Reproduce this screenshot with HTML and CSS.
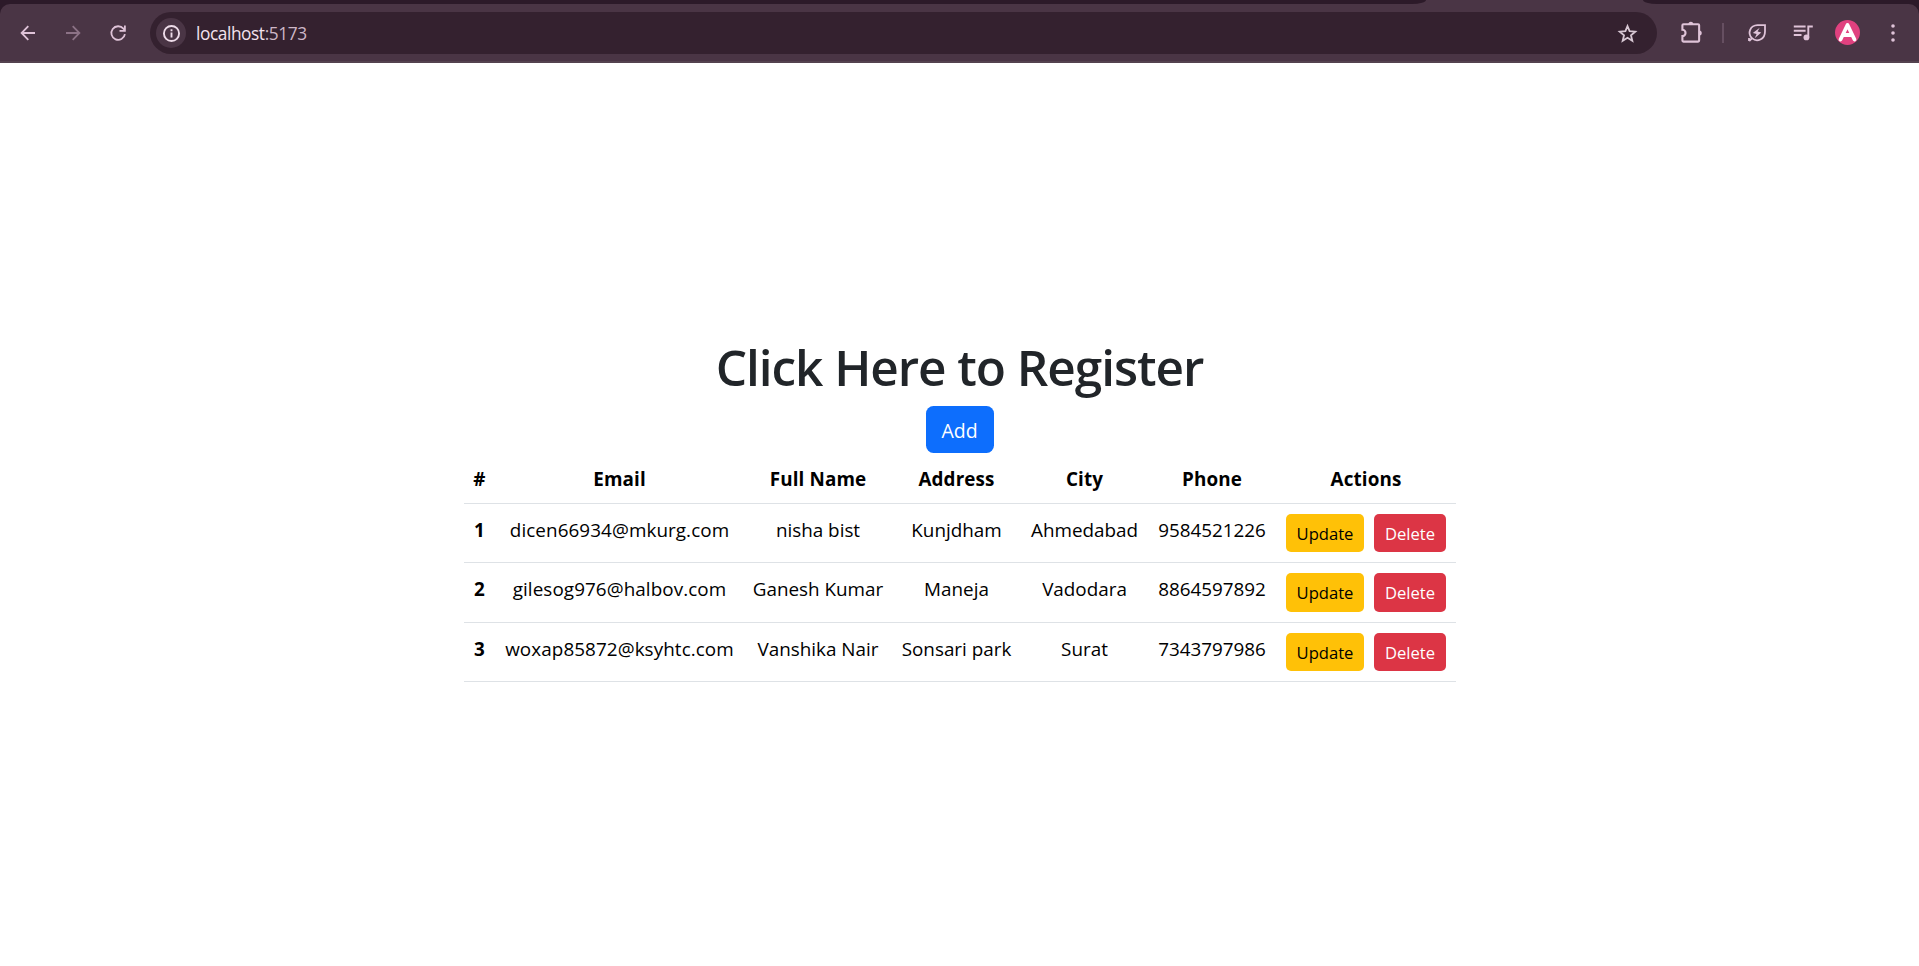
FILE: index.html
```html
<!DOCTYPE html>
<html lang="en">
<head>
<meta charset="utf-8">
<title>Register</title>
<link rel="stylesheet" href="styles.css">
</head>
<body>
<header class="browser">
  <div class="strip"><div class="strip-left"></div><div class="strip-right"></div></div>
  <div class="toolbar">
    <nav class="nav">
      <svg class="icon" viewBox="0 0 20 20"><path d="M17 10H3.8M10.3 3.2L3.6 10l6.7 6.8"/></svg>
      <svg class="icon dim" viewBox="0 0 20 20"><path d="M3 10h13.2M9.7 3.2l6.7 6.8-6.7 6.8"/></svg>
      <svg class="icon" viewBox="0 0 20 20"><path d="M16.9 11.1A6.8 6.8 0 1 1 15.4 5.7L16.8 7.2M16.9 2.5v5.4h-5.4"/></svg>
    </nav>
    <div class="omnibox">
      <span class="info"><svg class="icon" viewBox="0 0 20 20"><circle cx="10" cy="10" r="7.2"/><path d="M10 9v4.7M10 6v1.9"/></svg></span>
      <span class="url">localhost<span class="port">:5173</span></span>
      <svg class="icon star" viewBox="0 0 20 20"><path d="M10 2.9l2 4.9 5.4.4-4.1 3.5 1.3 5.2-4.6-2.8-4.6 2.8 1.3-5.2-4.1-3.5 5.4-.4z"/></svg>
    </div>
    <div class="tools">
      <svg class="puzzle" viewBox="0 0 22 22"><path d="M2.3 4.1q0-1 1-1h14q1 0 1 1v14.6q0 1-1 1h-14q-1 0-1-1v-4.3a3 3 0 0 0 0-6z"/><path class="solid" d="M8 3a2.4 2.4 0 0 1 4.8 0zM18.4 9a2.4 2.4 0 0 1 0 4.8z"/></svg>
      <span class="divider"></span>
      <svg class="leaf" viewBox="0 0 20 20"><path d="M2.2 18L5 15.2C0 10 3.2 2.4 10.5 2.2H18v6.2C18 16.5 10 19.7 5 15.2M2 15v3"/><path class="solid" d="M12.7 4.8L5.8 9.9l3.8 1.1-1.9 4.2 6.6-5.7-3.7-1.1z"/></svg>
      <svg class="music" viewBox="0 0 20 20"><path d="M.8 3.5h11.8M.8 7.8h11.8M.8 12h7.7M15.3 14.5V3.5h4.5"/><circle class="solid" cx="13.4" cy="14.4" r="2.9"/></svg>
      <span class="avatar"><svg viewBox="0 0 25 25"><path d="M5.5 19.5L12.5 5l7 14.5M9 15h7"/></svg></span>
      <svg class="dots" viewBox="0 0 4 20"><circle cx="2" cy="3" r="1.8"/><circle cx="2" cy="10" r="1.8"/><circle cx="2" cy="17" r="1.8"/></svg>
    </div>
  </div>
</header>
<main class="page">
  <h1 class="title">Click Here to Register</h1>
  <button class="btn btn-primary">Add</button>
  <table class="table">
    <colgroup><col class="c-id"><col class="c-email"><col class="c-name"><col class="c-address"><col class="c-city"><col class="c-phone"><col class="c-actions"></colgroup>
    <thead><tr><th>#</th><th>Email</th><th>Full Name</th><th>Address</th><th>City</th><th>Phone</th><th>Actions</th></tr></thead>
    <tbody>
      <tr><th>1</th><td class="cell-email">dicen66934@mkurg.com</td><td>nisha bist</td><td>Kunjdham</td><td>Ahmedabad</td><td>9584521226</td><td class="cell-actions"><div class="actions"><button class="btn btn-sm btn-warning">Update</button><button class="btn btn-sm btn-danger">Delete</button></div></td></tr>
      <tr class="tall"><th>2</th><td class="cell-email">gilesog976@halbov.com</td><td>Ganesh Kumar</td><td>Maneja</td><td>Vadodara</td><td>8864597892</td><td class="cell-actions"><div class="actions"><button class="btn btn-sm btn-warning">Update</button><button class="btn btn-sm btn-danger">Delete</button></div></td></tr>
      <tr><th>3</th><td class="cell-email">woxap85872@ksyhtc.com</td><td>Vanshika Nair</td><td>Sonsari park</td><td>Surat</td><td>7343797986</td><td class="cell-actions"><div class="actions"><button class="btn btn-sm btn-warning">Update</button><button class="btn btn-sm btn-danger">Delete</button></div></td></tr>
    </tbody>
  </table>
</main>
</body>
</html>
```
FILE: styles.css
```css
* { box-sizing: border-box; }
body { margin: 0; height: 966px; overflow: hidden; background: #fff; color: #000; font: 18.85px/30px "Open Sans", "Noto Sans", sans-serif; }
.browser { height: 63px; background: linear-gradient(#4a3545 4px, #2c1a29 4px, #2c1a29 20px, #4a3545 20px); border-bottom: 2px solid #54424f; }
.strip { display: flex; justify-content: space-between; height: 4px; }
.strip-left, .strip-right { background: #2c1a29; }
.strip-left { width: 1426px; border-bottom-right-radius: 14px 4px; }
.strip-right { width: 276px; border-bottom-left-radius: 14px 4px; }
.toolbar { display: flex; height: 57px; padding-top: 8px; background: #4a3545; border-radius: 10px 10px 0 0; }
.nav { display: flex; align-items: center; gap: 25px; width: 150px; height: 42px; padding: 0 0 1px 17.5px; }
svg { fill: none; stroke: #dfc3d8; stroke-width: 1.8; display: block; flex: none; }
.solid { fill: #dfc3d8; stroke: none; }
.icon { width: 20px; height: 20px; }
.dim { stroke: #8c7286; }
.omnibox { display: flex; align-items: center; width: 1507px; height: 42px; padding: 0 19px 0 6px; border-radius: 21px; background: #34212f; }
.info { display: flex; align-items: center; justify-content: center; width: 30px; height: 30px; border-radius: 50%; background: #4a3545; }
.info .icon { stroke: #eedce9; width: 21px; height: 21px; }
.url { flex: 1; margin-left: 10px; padding-top: 1px; color: #f3e2ee; font-size: 17.3px; letter-spacing: -.42px; }
.port { color: #cdb7c7; }
.star { stroke: #d8c8d4; width: 21px; height: 21px; stroke-width: 1.7; }
.tools { display: flex; align-items: center; height: 42px; padding: 0 0 1px 23px; }
.puzzle { width: 23px; height: 23px; stroke-width: 2; }
.divider { width: 2px; height: 20px; margin-left: 19px; background: #664f61; }
.leaf { width: 20px; height: 20px; margin-left: 23px; }
.music { width: 20px; height: 20px; margin-left: 26px; stroke-width: 1.9; }
.avatar { width: 25px; height: 25px; margin-left: 22px; border-radius: 50%; background: #e0417f; }
.avatar svg { stroke: #fff; stroke-width: 3.8; stroke-linecap: round; stroke-linejoin: round; }
.dots { width: 4px; height: 20px; margin-left: 30.5px; fill: #dfc3d8; stroke: none; }
.page { display: flex; flex-direction: column; align-items: center; padding-top: 273px; }
.title { margin: 0 0 10px; padding-top: 1px; height: 60px; color: #212529; font-size: 49.5px; line-height: 60px; font-weight: 600; letter-spacing: -1.06px; white-space: nowrap; }
.btn { display: block; padding: 0; border: 0; color: #fff; font: 19.5px/49px "Open Sans", "Noto Sans", sans-serif; }
.btn-primary { width: 68px; height: 47px; border-radius: 7.5px; background: #0d6efd; }
.table { width: 992px; table-layout: fixed; border-collapse: separate; border-spacing: 0; text-align: center; }
.table th, .table td { padding: 11px 0 9px 1px; border-bottom: 1px solid #dee2e6; vertical-align: top; white-space: nowrap; }
.table th { font-weight: 700; }
.table thead th { letter-spacing: .12px; }
.table .cell-email { letter-spacing: .08px; }
.table .cell-actions { padding: 10px 0; }
.c-id { width: 31px; }
.c-email { width: 249px; }
.c-name { width: 148px; }
.c-address { width: 129px; }
.c-city { width: 127px; }
.c-phone { width: 128px; }
.c-actions { width: 180px; }
.actions { display: flex; gap: 10px; padding-left: 10px; }
.btn-sm { height: 38px; padding: 1px 0 0 1px; border-radius: 5px; font-size: 16.6px; line-height: 37px; }
.tall .btn-sm { height: 39px; padding-bottom: 1px; }
.btn-warning { width: 78px; background: #ffc107; color: #000; }
.btn-danger { width: 72px; background: #dc3545; }
```
